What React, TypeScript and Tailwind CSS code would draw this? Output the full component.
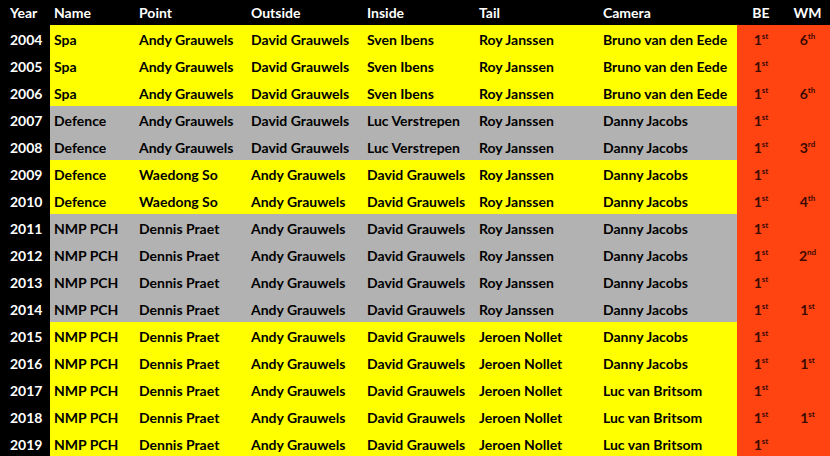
const rows: [string, string, string, string, string, string, string, string, string, "y" | "g"][] = [
  ["2004", "Spa", "Andy Grauwels", "David Grauwels", "Sven Ibens", "Roy Janssen", "Bruno van den Eede", "1st", "6th", "y"],
  ["2005", "Spa", "Andy Grauwels", "David Grauwels", "Sven Ibens", "Roy Janssen", "Bruno van den Eede", "1st", "", "y"],
  ["2006", "Spa", "Andy Grauwels", "David Grauwels", "Sven Ibens", "Roy Janssen", "Bruno van den Eede", "1st", "6th", "y"],
  ["2007", "Defence", "Andy Grauwels", "David Grauwels", "Luc Verstrepen", "Roy Janssen", "Danny Jacobs", "1st", "", "g"],
  ["2008", "Defence", "Andy Grauwels", "David Grauwels", "Luc Verstrepen", "Roy Janssen", "Danny Jacobs", "1st", "3rd", "g"],
  ["2009", "Defence", "Waedong So", "Andy Grauwels", "David Grauwels", "Roy Janssen", "Danny Jacobs", "1st", "", "y"],
  ["2010", "Defence", "Waedong So", "Andy Grauwels", "David Grauwels", "Roy Janssen", "Danny Jacobs", "1st", "4th", "y"],
  ["2011", "NMP PCH", "Dennis Praet", "Andy Grauwels", "David Grauwels", "Roy Janssen", "Danny Jacobs", "1st", "", "g"],
  ["2012", "NMP PCH", "Dennis Praet", "Andy Grauwels", "David Grauwels", "Roy Janssen", "Danny Jacobs", "1st", "2nd", "g"],
  ["2013", "NMP PCH", "Dennis Praet", "Andy Grauwels", "David Grauwels", "Roy Janssen", "Danny Jacobs", "1st", "", "g"],
  ["2014", "NMP PCH", "Dennis Praet", "Andy Grauwels", "David Grauwels", "Roy Janssen", "Danny Jacobs", "1st", "1st", "g"],
  ["2015", "NMP PCH", "Dennis Praet", "Andy Grauwels", "David Grauwels", "Jeroen Nollet", "Danny Jacobs", "1st", "", "y"],
  ["2016", "NMP PCH", "Dennis Praet", "Andy Grauwels", "David Grauwels", "Jeroen Nollet", "Danny Jacobs", "1st", "1st", "y"],
  ["2017", "NMP PCH", "Dennis Praet", "Andy Grauwels", "David Grauwels", "Jeroen Nollet", "Luc van Britsom", "1st", "", "y"],
  ["2018", "NMP PCH", "Dennis Praet", "Andy Grauwels", "David Grauwels", "Jeroen Nollet", "Luc van Britsom", "1st", "1st", "y"],
  ["2019", "NMP PCH", "Dennis Praet", "Andy Grauwels", "David Grauwels", "Jeroen Nollet", "Luc van Britsom", "1st", "", "y"],
];

const grid = "grid grid-cols-[50px_85px_112px_116px_112px_124px_138px_48px_45px]";

function Place({ v }: { v: string }) {
  if (!v) return null;
  return (
    <span className="flex items-start">
      {v.slice(0, -2)}
      <span className="text-[8px] leading-none -mt-[1px]">{v.slice(-2)}</span>
    </span>
  );
}

export default function App() {
  return (
    <div className="w-[830px] h-[456px] overflow-hidden bg-black font-['Lato',sans-serif] font-bold text-[14px] leading-none">
      <div className={`${grid} h-[25px] items-center text-white`}>
        <div className="pl-[10px]">Year</div>
        <div className="pl-[4px]">Name</div>
        <div className="pl-[4px]">Point</div>
        <div className="pl-[4px]">Outside</div>
        <div className="pl-[4px]">Inside</div>
        <div className="pl-[4px]">Tail</div>
        <div className="pl-[4px]">Camera</div>
        <div className="text-center">BE</div>
        <div className="text-center">WM</div>
      </div>
      {rows.map((r) => {
        const bg = r[9] === "y" ? "bg-[#ffff00]" : "bg-[#b2b2b2]";
        return (
          <div key={r[0]} className={`${grid} h-[27px] text-black`}>
            <div className="flex items-center pl-[10px] pt-[3px] bg-black text-white">{r[0]}</div>
            {r.slice(1, 7).map((c, i) => (
              <div key={i} className={`flex items-center pl-[4px] pt-[3px] ${bg}`}>
                {c}
              </div>
            ))}
            <div className="flex items-center justify-center pt-[3px] bg-[#ff4411] text-[#3a0a00]">
              <Place v={r[7]} />
            </div>
            <div className="flex items-center justify-center pt-[3px] bg-[#ff4411] text-[#3a0a00]">
              <Place v={r[8]} />
            </div>
          </div>
        );
      })}
    </div>
  );
}
